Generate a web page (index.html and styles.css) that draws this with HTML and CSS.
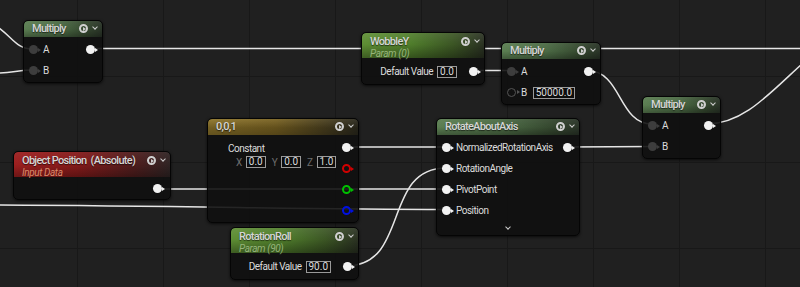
FILE: index.html
```html
<!DOCTYPE html>
<html lang="en">
<head>
  <meta charset="UTF-8" />
  <meta name="viewport" content="width=device-width, initial-scale=1.0"/>
  <title>Material Graph</title>
  <link rel="stylesheet" href="styles.css">
</head>
<body>

  <div class="graph">
    <!-- wires go under the nodes -->
    <svg class="wires" width="800" height="287" viewBox="0 0 800 287">
      <path d="M -10 22 C 12 34, 14 49, 33 49" />
      <path d="M 0 73 C 15 72, 20 70, 33 70" />
      <path d="M 88 48.5 L 800 48.5" />
      <path d="M 471 70.5 L 512 70.5" />
      <path d="M 587 70.5 C 622 70.5, 618 124, 652 124" />
      <path d="M 707 124 C 760 124, 790 60, 860 20" />
      <path d="M 344 147 L 446 147" />
      <path d="M 564 147 C 610 147, 610 146.5, 652 146.5" />
      <path d="M 155 189 L 446 189" />
      <path d="M 0 205 C 200 206, 300 209.5, 446 209.5" />
      <path d="M 346 266 C 410 266, 382 168, 446 168" />
    </svg>

    <!-- Multiply (top left) -->
    <div class="node n-mul1">
      <div class="head h-mul">
        <div class="title">Multiply</div>
        <div class="tools"><span class="prev"></span><span class="chev"></span></div>
      </div>
      <div class="body">
        <div class="ins">
          <div class="row"><span class="dot grey"></span>A</div>
          <div class="row"><span class="dot grey"></span>B</div>
        </div>
        <div class="outs">
          <div class="row"><span class="dot"></span></div>
        </div>
      </div>
    </div>

    <!-- WobbleY -->
    <div class="node n-wobble">
      <div class="head h-param tall">
        <div>
          <div class="title">WobbleY</div>
          <div class="sub">Param (0)</div>
        </div>
        <div class="tools"><span class="prev"></span><span class="chev"></span></div>
      </div>
      <div class="body param">
        <span class="label">Default Value</span>
        <span class="val">0.0</span>
        <span class="dot far"></span>
      </div>
    </div>

    <!-- Multiply (middle) -->
    <div class="node n-mul2">
      <div class="head h-mul">
        <div class="title">Multiply</div>
        <div class="tools"><span class="prev"></span><span class="chev"></span></div>
      </div>
      <div class="body">
        <div class="ins">
          <div class="row"><span class="dot grey"></span>A</div>
          <div class="row"><span class="dot hollow"></span>B <span class="val">50000.0</span></div>
        </div>
        <div class="outs">
          <div class="row"><span class="dot"></span></div>
        </div>
      </div>
    </div>

    <!-- Multiply (right) -->
    <div class="node n-mul3">
      <div class="head h-mul">
        <div class="title">Multiply</div>
        <div class="tools"><span class="prev"></span><span class="chev"></span></div>
      </div>
      <div class="body">
        <div class="ins">
          <div class="row"><span class="dot grey"></span>A</div>
          <div class="row"><span class="dot grey"></span>B</div>
        </div>
        <div class="outs">
          <div class="row"><span class="dot"></span></div>
        </div>
      </div>
    </div>

    <!-- Object Position -->
    <div class="node n-objpos">
      <div class="head h-input tall">
        <div>
          <div class="title">Object Position&nbsp; (Absolute)</div>
          <div class="sub">Input Data</div>
        </div>
        <div class="tools"><span class="prev"></span><span class="chev"></span></div>
      </div>
      <div class="body single">
        <span class="dot"></span>
      </div>
    </div>

    <!-- Constant 0,0,1 -->
    <div class="node n-const">
      <div class="head h-const">
        <div class="title">0,0,1</div>
        <div class="tools"><span class="prev"></span><span class="chev"></span></div>
      </div>
      <div class="body">
        <div class="const-in">
          <div class="const-name">Constant</div>
          <div class="xyz">
            <span class="axis">X</span><span class="val">0.0</span>
            <span class="axis">Y</span><span class="val">0.0</span>
            <span class="axis">Z</span><span class="val">1.0</span>
          </div>
        </div>
        <div class="outs">
          <div class="row"><span class="dot"></span></div>
          <div class="row"><span class="dot hollow red"></span></div>
          <div class="row"><span class="dot hollow green"></span></div>
          <div class="row"><span class="dot hollow blue"></span></div>
        </div>
      </div>
    </div>

    <!-- RotateAboutAxis -->
    <div class="node n-rotate">
      <div class="head h-mul">
        <div class="title">RotateAboutAxis</div>
        <div class="tools"><span class="prev"></span><span class="chev"></span></div>
      </div>
      <div class="body">
        <div class="ins">
          <div class="row"><span class="dot"></span>NormalizedRotationAxis</div>
          <div class="row"><span class="dot"></span>RotationAngle</div>
          <div class="row"><span class="dot"></span>PivotPoint</div>
          <div class="row"><span class="dot"></span>Position</div>
        </div>
        <div class="outs">
          <div class="row"><span class="dot"></span></div>
        </div>
      </div>
      <div class="more"><span class="chev"></span></div>
    </div>

    <!-- RotationRoll -->
    <div class="node n-roll">
      <div class="head h-param tall">
        <div>
          <div class="title">RotationRoll</div>
          <div class="sub">Param (90)</div>
        </div>
        <div class="tools"><span class="prev"></span><span class="chev"></span></div>
      </div>
      <div class="body param">
        <span class="label">Default Value</span>
        <span class="val">90.0</span>
        <span class="dot far"></span>
      </div>
    </div>
  </div>

</body>
</html>
```

FILE: styles.css
```css
body {
  margin: 0;
  background: #1f1f1f;
  font-family: Roboto, "Liberation Sans", sans-serif;
}

.graph {
  position: relative;
  width: 800px;
  height: 287px;
  overflow: hidden;
  background-color: #202020;
  background-image:
    linear-gradient(90deg, #181818 1px, transparent 1px),
    linear-gradient(#181818 1px, transparent 1px);
  background-size: 86px 86px;
  background-position: 77px 76px;
}

.wires {
  position: absolute;
  left: 0;
  top: 0;
}

.wires path {
  fill: none;
  stroke: #e6e6e6;
  stroke-width: 1.5;
}

/* nodes */

.node {
  position: absolute;
  background: rgba(15, 16, 15, 0.9);
  border: 1px solid #050505;
  border-radius: 5px;
  box-shadow: 0 1px 3px rgba(0, 0, 0, 0.7);
  overflow: hidden;
  color: #dcdcdc;
  font-size: 10px;
  letter-spacing: -0.5px;
}

.n-mul1 { left: 23px; top: 20px; width: 78px; }
.n-wobble { left: 361px; top: 32px; width: 122px; }
.n-mul2 { left: 501px; top: 42px; width: 98px; }
.n-mul3 { left: 642px; top: 96px; width: 77px; }
.n-objpos { left: 13px; top: 151px; width: 156px; }
.n-const { left: 207px; top: 118px; width: 150px; }
.n-rotate { left: 436px; top: 118px; width: 142px; }
.n-roll { left: 230px; top: 227px; width: 127px; }

.head {
  display: flex;
  justify-content: space-between;
  align-items: flex-start;
  height: 16px;
  padding: 0 5px 0 8px;
  box-sizing: border-box;
  border-radius: 4px 4px 0 0;
}

.head.tall {
  height: 25px;
  padding-top: 1px;
}

.title {
  font-size: 11px;
  line-height: 15px;
  font-weight: 500;
  color: #d6d6d6;
  letter-spacing: -0.7px;
  text-shadow: 0 1px 1px rgba(0, 0, 0, 0.6);
}

.sub {
  font-size: 10px;
  line-height: 10px;
  font-style: italic;
  letter-spacing: -0.4px;
}

.h-mul {
  background:
    linear-gradient(180deg, rgba(255, 255, 255, 0.05), rgba(0, 0, 0, 0) 50%, rgba(0, 0, 0, 0.3)),
    linear-gradient(90deg, #5b7e52 0%, #4c6b45 45%, #35482f 80%, #2a3428 100%);
}

.h-param {
  background:
    linear-gradient(180deg, rgba(255, 255, 255, 0.08), rgba(0, 0, 0, 0) 45%, rgba(0, 0, 0, 0.35)),
    linear-gradient(90deg, #5e8e34 0%, #4f7d2b 40%, #3b5524 75%, #2a3122 100%);
}

.h-param .sub { color: #95b47a; }

.h-const {
  background:
    linear-gradient(180deg, rgba(255, 255, 255, 0.06), rgba(0, 0, 0, 0.2) 55%, rgba(0, 0, 0, 0.3)),
    linear-gradient(90deg, #8f762b 0%, #7a6322 45%, #4a4020 80%, #2c2a1e 100%);
}

.h-input {
  background:
    linear-gradient(180deg, rgba(255, 255, 255, 0.05), rgba(0, 0, 0, 0) 50%, rgba(0, 0, 0, 0.3)),
    linear-gradient(90deg, #9d1f1f 0%, #851a1a 40%, #4d1d1d 78%, #2f2424 100%);
}

.h-input .sub { color: #d98a6a; }

/* header icons */

.tools {
  display: flex;
  align-items: center;
  gap: 5px;
  height: 15px;
}

.prev {
  position: relative;
  width: 5px;
  height: 5px;
  border: 2px solid #cfcfcf;
  border-radius: 50%;
}

.prev::after {
  content: "";
  position: absolute;
  left: 1.5px;
  top: 0.5px;
  border-left: 3px solid #cfcfcf;
  border-top: 2px solid transparent;
  border-bottom: 2px solid transparent;
}

.chev {
  width: 3px;
  height: 3px;
  margin-top: -3px;
  border-right: 1.5px solid #d0d0d0;
  border-bottom: 1.5px solid #d0d0d0;
  transform: rotate(45deg);
}

/* pins */

.body {
  display: flex;
  justify-content: space-between;
  padding: 2px 0 1px;
}

.ins {
  padding-left: 5px;
}

.outs {
  padding-right: 7px;
}

.row {
  display: flex;
  align-items: center;
  gap: 5px;
  height: 21px;
  white-space: nowrap;
}

.dot {
  position: relative;
  flex: none;
  width: 9px;
  height: 9px;
  border-radius: 50%;
  background: #f2f2f2;
  box-sizing: border-box;
}

.dot::after {
  content: "";
  position: absolute;
  right: -3px;
  top: 2.5px;
  border-left: 3px solid #f2f2f2;
  border-top: 2px solid transparent;
  border-bottom: 2px solid transparent;
}

.dot.grey { background: #3d3d3d; }
.dot.grey::after { border-left-color: #3d3d3d; }

.dot.hollow {
  background: transparent;
  border: 1.5px solid #555;
}
.dot.hollow::after { border-left-color: #555; right: -4.5px; top: 1px; }

.dot.red, .dot.green, .dot.blue { border-width: 2px; }
.dot.red::after, .dot.green::after, .dot.blue::after { right: -5px; top: 0.5px; }

.dot.red { border-color: #d00000; }
.dot.red::after { border-left-color: #d00000; }
.dot.green { border-color: #00c000; }
.dot.green::after { border-left-color: #00c000; }
.dot.blue { border-color: #0010e0; }
.dot.blue::after { border-left-color: #0010e0; }

.val {
  display: inline-block;
  padding: 0 2px;
  border: 1px solid #9a9a9a;
  background: #0d0d0d;
  color: #dcdcdc;
  line-height: 10px;
  letter-spacing: 0;
}

.row .val {
  margin-left: 1px;
}

/* parameter nodes */

.body.param {
  justify-content: flex-end;
  align-items: center;
  gap: 4px;
  height: 21px;
  padding: 3px 6px 2px 0;
}

.dot.far {
  margin-left: 8px;
}

.body.single {
  justify-content: flex-end;
  align-items: center;
  height: 21px;
  padding: 1px 8px 0 0;
}

/* constant */

.const-in {
  padding: 5px 0 0 20px;
}

.const-name {
  line-height: 14px;
}

.xyz {
  display: flex;
  align-items: center;
  gap: 4px;
  height: 12px;
  margin-left: 8px;
}

.axis {
  color: #6e6e6e;
}

.xyz .val + .axis {
  margin-left: 2px;
}

.more {
  display: flex;
  justify-content: center;
  align-items: center;
  height: 13px;
}
```
